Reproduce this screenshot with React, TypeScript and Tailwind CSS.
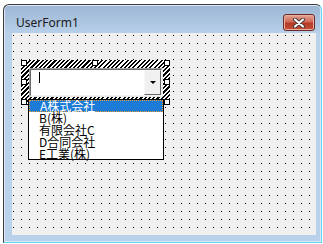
import React from 'react';

const items = ['A株式会社', 'B(株)', '有限会社C', 'D合同会社', 'E工業(株)'];

const Handle: React.FC<{ className: string }> = ({ className }) => (
  <div className={`absolute w-[6px] h-[6px] bg-white border border-black ${className}`} />
);

const App: React.FC = () => {
  return (
    <div className="w-[323px] h-[244px] bg-white pt-[4px] pl-[3px] font-['Noto_Sans',sans-serif]">
      {/* window */}
      <div className="w-[319px] h-[239px] flex flex-col border border-[#3c3c3c] border-b-[#5fd7ee] border-r-[#5fd7ee] rounded-t-[6px] bg-[linear-gradient(#9cb6d4,#bad1ea_30px,#b9d1ea)] shadow-[inset_0_0_0_1px_#dbe7f4]">
        {/* title bar */}
        <div className="h-[28px] flex items-start justify-between pl-[12px] pr-[6px] pt-[9px]">
          <span className="text-[12px] leading-[14px] mt-[2px] text-[#1b1b1b]">UserForm1</span>
          <div className="w-[32px] h-[17px] rounded-[3px] border border-[#6b2b22] bg-[linear-gradient(#e4a494,#cf6a57_45%,#b63a26_55%,#c3503a)] flex items-center justify-center shadow-[inset_0_0_0_1px_#e8b0a4]">
            <svg width="12" height="10" viewBox="0 0 12 10">
              <path d="M2 1.5 L10 8.5 M10 1.5 L2 8.5" stroke="#4a3a3a" strokeWidth="4" strokeLinecap="round" />
              <path d="M2 1.5 L10 8.5 M10 1.5 L2 8.5" stroke="#ffffff" strokeWidth="2" strokeLinecap="round" />
            </svg>
          </div>
        </div>
        {/* client area */}
        <div className="ml-[8px] w-[304px] h-[202px] relative bg-[#f0f0f0] bg-[conic-gradient(from_270deg_at_1px_1px,#000_90deg,transparent_0)] bg-[size:8px_8px] bg-[position:1px_2px]">
          {/* selected combobox frame */}
          <div className="absolute left-[9px] top-[27px] w-[149px] h-[45px] bg-[repeating-linear-gradient(135deg,#000_0_1.5px,#fff_1.5px_3px)]">
            <Handle className="left-0 top-0" />
            <Handle className="left-[71px] top-0" />
            <Handle className="left-[143px] top-0" />
            <Handle className="left-0 top-[19px]" />
            <Handle className="left-[143px] top-[19px]" />
            <Handle className="left-0 top-[39px]" />
            <Handle className="left-[143px] top-[39px]" />
            {/* combobox */}
            <div className="absolute left-[8px] top-[8px] w-[134px] h-[29px] flex border border-[#a0a0a0] border-b-[#e8e8e8] border-r-[#e8e8e8] bg-white">
              <div className="flex-1 flex border border-[#696969] border-b-[#f0f0f0] border-r-[#f0f0f0]">
                <div className="flex-1 pl-[8px] pt-[2px]">
                  <div className="w-[1px] h-[11px] bg-black" />
                </div>
                <div className="w-[17px] h-full bg-[#f0f0f0] border border-[#f8f8f8] border-b-[#696969] border-r-[#696969] flex items-center justify-center">
                  <div className="w-0 h-0 border-l-[3px] border-r-[3px] border-t-[3px] border-l-transparent border-r-transparent border-t-black" />
                </div>
              </div>
            </div>
          </div>
          {/* dropdown list */}
          <div className="absolute left-[16px] top-[66px] w-[136px] h-[61px] bg-white border border-black font-['Noto_Sans_CJK_JP',sans-serif] text-[12px] leading-[12px] text-black">
            {items.map((t, i) => (
              <div
                key={t}
                className={
                  i === 0
                    ? 'h-[12px] pl-[10px] bg-[#1c7bd6] text-white border border-dotted border-[#f39a2c] leading-[10px]'
                    : 'h-[12px] pl-[10px] whitespace-nowrap'
                }
              >
                {t}
              </div>
            ))}
          </div>
        </div>
      </div>
    </div>
  );
};

export default App;
